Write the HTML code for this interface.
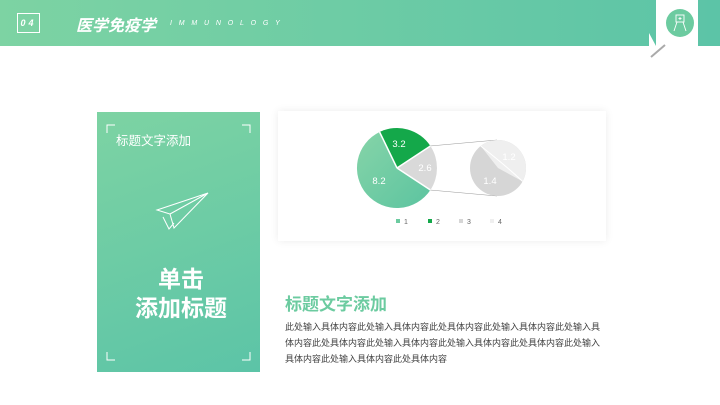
<!DOCTYPE html>
<html><head><meta charset="utf-8"><style>
*{margin:0;padding:0;box-sizing:border-box}
body{width:720px;height:405px;background:#fff;position:relative;overflow:hidden;font-family:"Liberation Sans","Noto Sans CJK SC",sans-serif}
.top{position:absolute;left:0;top:0;width:720px;height:46px;background:linear-gradient(90deg,#7dd3a3,#5cc4a7)}
.num{position:absolute;left:17px;top:13px;width:23px;height:20px;border:1px solid #fff;color:#fff;font-size:9px;font-style:italic;font-weight:bold;text-align:center;line-height:18px;letter-spacing:3px}
.ttl{position:absolute;left:76px;top:12px;color:#fff;font-size:16px;font-weight:bold;font-style:italic}
.en{position:absolute;left:170px;top:20px;color:#fff;font-size:7px;font-style:italic;letter-spacing:6.8px}
.tab{position:absolute;left:656px;top:0;width:42px;height:46px;background:#fff}
.card{position:absolute;left:97px;top:112px;width:163px;height:260px;background:linear-gradient(160deg,#7dd3a3,#5cc4a7)}
.chart{position:absolute;left:278px;top:111px;width:328px;height:130px;background:#fff;box-shadow:0 0 8px rgba(0,0,0,0.08)}
.h{position:absolute;left:285px;top:290px;color:#6ccba0;font-size:17px;font-weight:bold}
.p{position:absolute;left:285px;top:319px;color:#444;font-size:9px;line-height:16px;letter-spacing:0;white-space:nowrap}
</style></head><body>
<div class="top"></div>
<div class="num">04</div>
<div class="ttl">医学免疫学</div>
<div class="en">IMMUNOLOGY</div>
<div class="tab"></div>
<svg style="position:absolute;left:645px;top:0" width="75" height="62">
<polygon points="4,33 4,46 11,46" fill="#fff"/>
<line x1="6" y1="57" x2="20" y2="45" stroke="#aaa" stroke-width="2"/>
<circle cx="35" cy="23" r="14" fill="#6ccba0"/>
<g stroke="#fff" stroke-width="0.9" fill="none"><rect x="31" y="15" width="8" height="7"/><line x1="35" y1="17" x2="35" y2="20"/><line x1="33.5" y1="18.5" x2="36.5" y2="18.5"/><path d="M29 31 L32 22 M41 31 L38 22"/></g>
</svg>
<div class="card"></div>
<svg style="position:absolute;left:97px;top:112px" width="163" height="260">
<g stroke="#fff" stroke-width="1" fill="none">
<path d="M10 21 V13 H18"/><path d="M145 13 H153 V21"/><path d="M10 240 V248 H18"/><path d="M145 248 H153 V240"/>
<path d="M60 98 L111 81 L77 116 L73 102 Z M73 102 L111 81 M66 105 L72 117 L77 111"/>
</g>
<text x="19" y="33" fill="#fff" font-size="12.5" font-family="Liberation Sans,Noto Sans CJK SC,sans-serif">标题文字添加</text>
<text x="84" y="175" fill="#fff" font-size="23" font-weight="bold" text-anchor="middle" font-family="Liberation Sans,Noto Sans CJK SC,sans-serif">单击</text>
<text x="84" y="204" fill="#fff" font-size="23" font-weight="bold" text-anchor="middle" font-family="Liberation Sans,Noto Sans CJK SC,sans-serif">添加标题</text>
</svg>
<div class="chart"></div>
<svg style="position:absolute;left:0;top:0" width="720" height="405" font-family="Liberation Sans,sans-serif">
<defs><linearGradient id="g1" x1="0" y1="0" x2="1" y2="1"><stop offset="0" stop-color="#86d4a8"/><stop offset="1" stop-color="#5cc4a0"/></linearGradient></defs>
<line x1="430" y1="146" x2="497" y2="140" stroke="#999" stroke-width="0.6"/>
<line x1="430" y1="190" x2="497" y2="196" stroke="#999" stroke-width="0.6"/>
<path d="M397 168 L379.6 132 A40 40 0 1 0 430.4 190 Z" fill="url(#g1)"/>
<path d="M397 168 L379.6 132 A40 40 0 0 1 430.4 146 Z" fill="#14a84a"/>
<path d="M397 168 L430.4 146 A40 40 0 0 1 430.4 190 Z" fill="#d9d9d9"/>
<path d="M397 168 L379.6 132 M397 168 L430.4 146 M397 168 L430.4 190" stroke="#fff" stroke-width="1.5"/>
<circle cx="498" cy="168" r="28" fill="#d6d6d6"/>
<path d="M498 168 L480.7 146 A28 28 0 0 1 522.6 181.4 Z" fill="#efefef"/>
<path d="M480.7 146 Q505 165 522.6 181.4" stroke="#fff" stroke-width="1" fill="none"/>
<g fill="#fff" font-size="9.5" text-anchor="middle"><text x="399" y="147">3.2</text><text x="425" y="171">2.6</text><text x="379" y="184">8.2</text><text x="490" y="184">1.4</text><text x="509" y="160">1.2</text></g>
<g font-size="7" fill="#666"><rect x="396" y="219" width="4" height="4" fill="#6ccba0"/><text x="404" y="224">1</text><rect x="428" y="219" width="4" height="4" fill="#14a84a"/><text x="436" y="224">2</text><rect x="459" y="219" width="4" height="4" fill="#d6d6d6"/><text x="467" y="224">3</text><rect x="490" y="219" width="4" height="4" fill="#efefef"/><text x="498" y="224">4</text></g>
</svg>
<div class="h">标题文字添加</div>
<div class="p">此处输入具体内容此处输入具体内容此处具体内容此处输入具体内容此处输入具<br>体内容此处具体内容此处输入具体内容此处输入具体内容此处具体内容此处输入<br>具体内容此处输入具体内容此处具体内容</div>
</body></html>
